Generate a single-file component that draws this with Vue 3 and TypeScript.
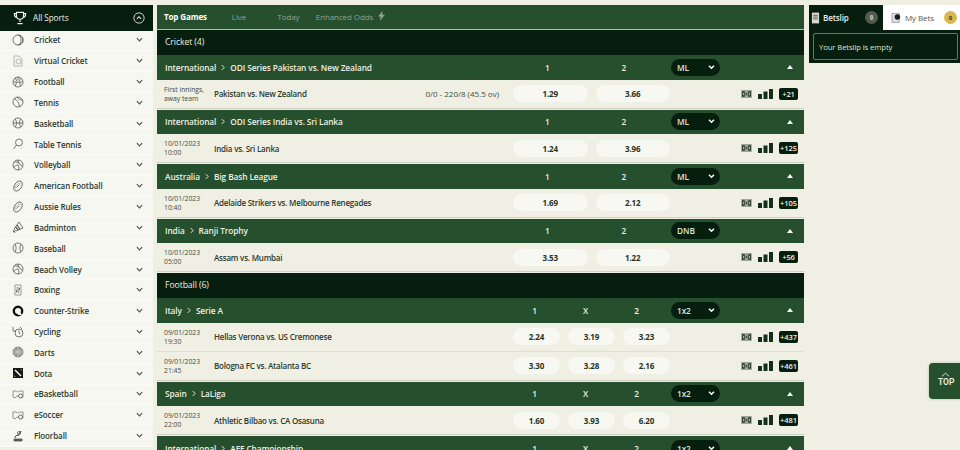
<script setup lang="ts">
interface Sport { name: string; icon: string }
interface Row { date: string[]; teams: string; score?: string; odds: string[]; more: string }
interface League { path: string[]; sel: string; labels: string[]; rows: Row[] }
interface Group { title: string; leagues: League[] }

const sports: Sport[] = [
  { name: 'Cricket', icon: 'cricket' }, { name: 'Virtual Cricket', icon: 'virtual' },
  { name: 'Football', icon: 'football' }, { name: 'Tennis', icon: 'tennis' },
  { name: 'Basketball', icon: 'basket' }, { name: 'Table Tennis', icon: 'tt' },
  { name: 'Volleyball', icon: 'volley' }, { name: 'American Football', icon: 'af' },
  { name: 'Aussie Rules', icon: 'af' }, { name: 'Badminton', icon: 'bad' },
  { name: 'Baseball', icon: 'base' }, { name: 'Beach Volley', icon: 'volley' },
  { name: 'Boxing', icon: 'box' }, { name: 'Counter-Strike', icon: 'cs' },
  { name: 'Cycling', icon: 'cyc' }, { name: 'Darts', icon: 'darts' },
  { name: 'Dota', icon: 'dota' }, { name: 'eBasketball', icon: 'pad' },
  { name: 'eSoccer', icon: 'pad' }, { name: 'Floorball', icon: 'floor' },
]

const groups: Group[] = [
  { title: 'Cricket (4)', leagues: [
    { path: ['International', 'ODI Series Pakistan vs. New Zealand'], sel: 'ML', labels: ['1', '2'], rows: [
      { date: ['First innings,', 'away team'], teams: 'Pakistan vs. New Zealand', score: '0/0 - 220/8 (45.5 ov)', odds: ['1.29', '3.66'], more: '+21' } ] },
    { path: ['International', 'ODI Series India vs. Sri Lanka'], sel: 'ML', labels: ['1', '2'], rows: [
      { date: ['10/01/2023', '10:00'], teams: 'India vs. Sri Lanka', odds: ['1.24', '3.96'], more: '+125' } ] },
    { path: ['Australia', 'Big Bash League'], sel: 'ML', labels: ['1', '2'], rows: [
      { date: ['10/01/2023', '10:40'], teams: 'Adelaide Strikers vs. Melbourne Renegades', odds: ['1.69', '2.12'], more: '+105' } ] },
    { path: ['India', 'Ranji Trophy'], sel: 'DNB', labels: ['1', '2'], rows: [
      { date: ['10/01/2023', '05:00'], teams: 'Assam vs. Mumbai', odds: ['3.53', '1.22'], more: '+56' } ] },
  ] },
  { title: 'Football (6)', leagues: [
    { path: ['Italy', 'Serie A'], sel: '1x2', labels: ['1', 'X', '2'], rows: [
      { date: ['09/01/2023', '19:30'], teams: 'Hellas Verona vs. US Cremonese', odds: ['2.24', '3.19', '3.23'], more: '+437' },
      { date: ['09/01/2023', '21:45'], teams: 'Bologna FC vs. Atalanta BC', odds: ['3.30', '3.28', '2.16'], more: '+461' } ] },
    { path: ['Spain', 'LaLiga'], sel: '1x2', labels: ['1', 'X', '2'], rows: [
      { date: ['09/01/2023', '22:00'], teams: 'Athletic Bilbao vs. CA Osasuna', odds: ['1.60', '3.93', '6.20'], more: '+481' } ] },
    { path: ['International', 'AFF Championship'], sel: '1x2', labels: ['1', 'X', '2'], rows: [] },
  ] },
]
const tabs = ['Top Games', 'Live', 'Today', 'Enhanced Odds']
</script>

<template>
  <div class="page">
    <aside class="side">
      <div class="side-head">
        <svg class="trophy" viewBox="0 0 16 16" width="14" height="14" fill="none" stroke="#efefe3" stroke-width="1.3">
          <path d="M4 1.500h8v4a4 4 0 0 1-8 0zM4 3H1.500c0 3 1 4 3 4.500M12 3h2.500c0 3-1 4-3 4.500M8 9.500v3M5 14.500h6" />
        </svg>
        <span class="side-title">All Sports</span>
        <svg class="up" viewBox="0 0 14 14" width="12" height="12" fill="none" stroke="#efefe3" stroke-width="1">
          <circle cx="7" cy="7" r="6" /><path d="M4.500 8l2.500-2.500L9.500 8" stroke-width="1.200" />
        </svg>
      </div>
      <div v-for="s in sports" :key="s.name" class="sport">
        <svg class="sicon" viewBox="0 0 12 12" width="12" height="12" fill="none" stroke="#55584f" stroke-width=".8">
          <template v-if="s.icon === 'cricket'"><circle cx="6" cy="6" r="5" /><path d="M6 1a5 5 0 0 1 0 10M7.500 1.500a7 7 0 0 1 0 9" /></template>
          <template v-else-if="s.icon === 'virtual'"><path d="M2 1h5l3 3v7H2z" stroke="#a5a79b" /><circle cx="6.500" cy="6.500" r="2.500" stroke="#a5a79b" /></template>
          <template v-else-if="s.icon === 'football'"><circle cx="6" cy="6" r="5" /><path d="M1.500 6h9M6 1v3.500M3.500 2l1 3M8.500 2l-1 3M3.500 10l1-4M8.500 10l-1-4" /></template>
          <template v-else-if="s.icon === 'tennis'"><circle cx="6" cy="6" r="5" /><path d="M2 2.500c3 1 5 4 5.500 8M10.500 4C8 4 6 2.500 5 1" /></template>
          <template v-else-if="s.icon === 'basket'"><circle cx="6" cy="6" r="5" /><path d="M1 6h10M3 2c2 2 2 6 0 8M9 2c-2 2-2 6 0 8" /></template>
          <template v-else-if="s.icon === 'tt'"><circle cx="7" cy="4.500" r="3.500" /><path d="M4.500 7L1.500 11M9 10.500h.5" /></template>
          <template v-else-if="s.icon === 'volley'"><circle cx="6" cy="6" r="5" /><path d="M6 1c0 3 1 4 4 6M6 6c-2 0-3.500 1-4.500 3M6 6c1 2 1 3.500 0 5M2 3c2-.5 4 0 6 2" /></template>
          <template v-else-if="s.icon === 'af'"><ellipse cx="6" cy="6" rx="3.500" ry="5.600" transform="rotate(35 6 6)" /><path d="M4.500 7.500l3-3" /><path d="M3 9a6 6 0 0 1 6-6" stroke="#a5a79b" /></template>
          <template v-else-if="s.icon === 'bad'"><path d="M7 1L2 8l2 2 7-3z" /><path d="M5 4l3 4M3.500 6l3 3M1 9.500l2 2" stroke-width="1.200" /></template>
          <template v-else-if="s.icon === 'base'"><circle cx="6" cy="6" r="5" /><path d="M3 2c1.500 2.500 1.500 5.500 0 8M9 2c-1.500 2.500-1.500 5.500 0 8" /></template>
          <template v-else-if="s.icon === 'box'"><path d="M3 1h6v10H3z" stroke="#85877c" /><path d="M4.500 4h3v2h-3v2h3" /></template>
          <template v-else-if="s.icon === 'cs'"><circle cx="6" cy="6" r="4.200" stroke="#111" stroke-width="2.400" /><path d="M6 4l4 6H6z" fill="#f7f7f1" stroke="none" /></template>
          <template v-else-if="s.icon === 'cyc'"><circle cx="7" cy="7" r="4" /><path d="M1 1v4h3M7 4.500V7l1.500 1M8 1l2 2" /></template>
          <template v-else-if="s.icon === 'darts'"><circle cx="6" cy="6" r="5" fill="#9a9c90" stroke="#777" /><path d="M1 6h10M6 1v10M2.500 3l7 6M2.500 9l7-6" stroke="#e6e6da" stroke-width=".5" /></template>
          <template v-else-if="s.icon === 'dota'"><rect x="1" y="1" width="10" height="10" fill="#151a14" stroke="none" /><path d="M3 3l6 6" stroke="#efefe3" stroke-width="1.600" /><path d="M8.500 2.500h1v1M2.500 8.500v1h1" stroke="#c7913b" /></template>
          <template v-else-if="s.icon === 'pad'"><path d="M1 3h3.500l1 1h1l1-1H11v6l-2 1-2-2H5l-2 2-2-1z" stroke="#77796e" /><circle cx="8.500" cy="8" r="2" fill="#f7f7f1" /></template>
          <template v-else><path d="M2 9h8v2H2z" fill="#55584f" /><path d="M3 8c0-2 2-3 4-3M9 1L6 6" stroke-width="1.200" /><circle cx="7" cy="3" r="1.500" /></template>
        </svg>
        <span class="sname">{{ s.name }}</span>
        <svg class="chev" viewBox="0 0 8 5" width="7" height="5" fill="none" stroke="#4c5a4f" stroke-width="1.400"><path d="M1 1l3 3 3-3" /></svg>
      </div>
    </aside>

    <main class="main">
      <nav class="tabs">
        <span v-for="(t, i) in tabs" :key="t" class="tab" :class="['t' + i]">{{ t }}
          <svg v-if="i === 3" viewBox="0 0 8 11" width="7" height="10" fill="#8fa294"><path d="M5 0L0 6h3L2 11l6-7H5z" /></svg>
        </span>
      </nav>
      <section v-for="g in groups" :key="g.title" class="group">
        <h2 class="gtitle">{{ g.title }}</h2>
        <div v-for="l in g.leagues" :key="l.path[1]" class="league">
          <div class="lhead">
            <div class="lname"><span>{{ l.path[0] }}</span><svg class="gt" viewBox="0 0 5 8" width="4" height="7" fill="none" stroke="#efefe3" stroke-width="1.200"><path d="M1 1l3 3-3 3" /></svg><span>{{ l.path[1] }}</span></div>
            <div class="olabels"><span v-for="(b, i) in l.labels" :key="i">{{ b }}</span></div>
            <div class="lright">
              <div class="sel">{{ l.sel }}
                <svg viewBox="0 0 8 6" width="7" height="5" fill="none" stroke="#fff" stroke-width="1.700"><path d="M1 1l3 3 3-3" /></svg>
              </div>
              <i class="tri"></i>
            </div>
          </div>
          <div v-for="r in l.rows" :key="r.teams" class="row">
            <div class="date"><span v-for="d in r.date" :key="d">{{ d }}</span></div>
            <div class="teams">{{ r.teams }}<span v-if="r.score" class="score">{{ r.score }}</span></div>
            <div class="odds"><button v-for="(o, i) in r.odds" :key="i" class="odd">{{ o }}</button></div>
            <div class="rright">
              <svg viewBox="0 0 12 9" width="11" height="8"><rect width="12" height="9" fill="#a3a593" /><path d="M1 1.500h3v6H1zM8 1.500h3v6H8z" fill="#26382a" /><path d="M2 3h1v3H2zM9 3h1v3H9z" fill="#c9cdbc" /><path d="M5 3h2v3H5z" fill="#4a5a4a" /></svg>
              <svg viewBox="0 0 15 10" width="15" height="10" fill="#12301c"><rect y="5" width="4" height="5" /><rect x="5.500" y="2.500" width="4" height="7.500" /><rect x="11" width="4" height="10" /></svg>
              <span class="more">{{ r.more }}</span>
            </div>
          </div>
        </div>
      </section>
    </main>

    <aside class="slip">
      <div class="sliptabs">
        <div class="st dark">
          <svg viewBox="0 0 10 12" width="9" height="12" fill="#d8d8cc"><path d="M1 0h8v12H1z" /><path d="M2.500 3h5M2.500 5h5M2.500 7h5" stroke="#333" stroke-width=".8" /></svg>
          <span>Betslip</span><b class="cnt grey">0</b>
        </div>
        <div class="st light">
          <svg viewBox="0 0 12 12" width="11" height="12"><path d="M1 1h8v10H1z" fill="#ddd" stroke="#777" stroke-width=".6" /><circle cx="7" cy="5" r="3" fill="#1c1c1c" /></svg>
          <span>My Bets</span><b class="cnt gold">0</b>
        </div>
      </div>
      <div class="slipbody"><div class="empty">Your Betslip is empty</div></div>
    </aside>

    <button class="top">
      <svg viewBox="0 0 10 5" width="9" height="5" fill="none" stroke="#efefe3"><path d="M1 4.500l4-3.500 4 3.500" /></svg>
      <span>TOP</span>
    </button>
  </div>
</template>

<style>
html, body { margin: 0; background: #efefe3; overflow: hidden; }
</style>

<style scoped>
.page {
  height: 450px; overflow: hidden; position: relative; box-sizing: border-box; padding-top: 5px;
  display: grid; grid-template-columns: 153px 647px 1fr; column-gap: 4px; align-items: start;
  background: #efefe3; color: #2e3a30;
  font-family: "Open Sans", "Noto Sans", sans-serif; font-size: 8px; font-weight: 600; letter-spacing: -.1px;
}
.side-head { height: 25.500px; background: #051e0d; color: #efefe3; display: flex; align-items: center; padding: 0 8px 0 13px; font-size: 8.300px; font-weight: 500; }
.trophy { margin-right: 6px; }
.side-title { flex: 1; }
.sport { height: 18.840px; border-bottom: 1px solid #fbfbf8; background: #f7f7f1; display: flex; align-items: center; padding: 0 10px 1px 12px; }
.sicon { margin-right: 10px; flex: none; }
.sname { flex: 1; }
.tabs { height: 24px; background: #254f2d; border-bottom: 1px solid #b7c0b0; display: flex; align-items: stretch; color: #8fa294; font-weight: 400; white-space: nowrap; }
.tab { display: flex; align-items: center; justify-content: center; gap: 5px; box-sizing: border-box; padding-bottom: 2px; }
.t0 { width: 57px; color: #fff; font-weight: 700; border-bottom: 1px solid #d9b64f; margin-bottom: -1px; }
.t1 { width: 50px; }
.t2 { width: 49px; }
.t3 { width: 75px; }
.gtitle { margin: 0; height: 25px; box-sizing: border-box; padding: 0 0 2px 8px; background: #051e0d; color: #efefe3; font-size: 8.700px; font-weight: 500; display: flex; align-items: center; }
.league { margin-bottom: 1px; }
.lhead { height: 24.500px; background: #254f2d; color: #efefe3; display: grid; grid-template-columns: 1fr 157px 134px; align-items: center; font-size: 8.300px; }
.lname { padding-left: 8px; display: flex; align-items: center; gap: 5px; }
.olabels { display: flex; width: 153px; margin-left: -4px; }
.olabels span { flex: 1; text-align: center; }
.lright { display: flex; align-items: center; padding-left: 1px; }
.sel { width: 49px; height: 17px; box-sizing: border-box; border-radius: 9px; background: #051e0d; color: #dfe3d6; display: flex; align-items: center; justify-content: space-between; padding: 0 5px 0 6px; }
.tri { width: 0; height: 0; margin-left: 67px; border: 3.500px solid transparent; border-top: 0; border-bottom: 4px solid #fff; }
.row { height: 29px; box-sizing: border-box; display: grid; grid-template-columns: 50px 1fr 157px 134px; align-items: center; padding-left: 7px; border-bottom: 1px solid #dfdfd3; }
.league .row:last-child { border-bottom: 1px solid #cfcfc4; }
.date { display: flex; flex-direction: column; font-size: 6.800px; font-weight: 400; line-height: 9px; color: #444c44; letter-spacing: 0; }
.teams { display: flex; justify-content: space-between; padding-right: 14px; letter-spacing: -.22px; }
.score { font-weight: 400; color: #444c44; letter-spacing: 0; }
.odds { display: flex; gap: 8px; }
.odd { flex: 1; height: 17px; border: 0; padding: 0; border-radius: 9px; background: #f8f8f2; font: inherit; font-weight: 700; color: #253428; letter-spacing: inherit; }
.rright { display: flex; align-items: center; padding-left: 71px; gap: 6px; }
.more { background: #051e0d; color: #efefe3; font-size: 7.500px; border-radius: 2px; height: 12px; min-width: 19px; box-sizing: border-box; display: flex; align-items: center; justify-content: center; padding: 0 1px; }
.slip { margin-left: 1px; }
.sliptabs { display: flex; height: 25px; }
.st { display: flex; align-items: center; box-sizing: border-box; }
.dark { width: 74px; background: #051e0d; color: #efefe3; padding: 0 5px 0 2px; gap: 3px; }
.light { width: 77px; background: #fff; color: #555; padding: 0 3px 0 8px; gap: 3px; font-weight: 400; }
.st span { flex: 1; }
.cnt { width: 13px; height: 13px; border-radius: 50%; font-size: 6px; display: flex; align-items: center; justify-content: center; }
.grey { background: #55594f; color: #c5c7bb; }
.gold { background: #d9b64f; color: #333; }
.slipbody { background: #051e0d; padding: 3px 2px 3px 4px; }
.empty { height: 27px; box-sizing: border-box; border: 1px solid #6a7568; border-radius: 2px; display: flex; align-items: center; padding-left: 5px; color: #dfe3d6; font-weight: 400; font-size: 7.700px; }
.top { position: absolute; left: 929px; top: 363px; width: 36px; height: 36px; border: 0; border-radius: 4px 0 0 4px; background: #254f2d; color: #efefe3; font: 600 8.500px "Roboto", sans-serif; display: flex; flex-direction: column; align-items: flex-start; padding: 9px 0 0 9px; box-shadow: 0 0 3px rgba(0,0,0,.25); }
.top svg { margin-left: 3px; }
</style>
